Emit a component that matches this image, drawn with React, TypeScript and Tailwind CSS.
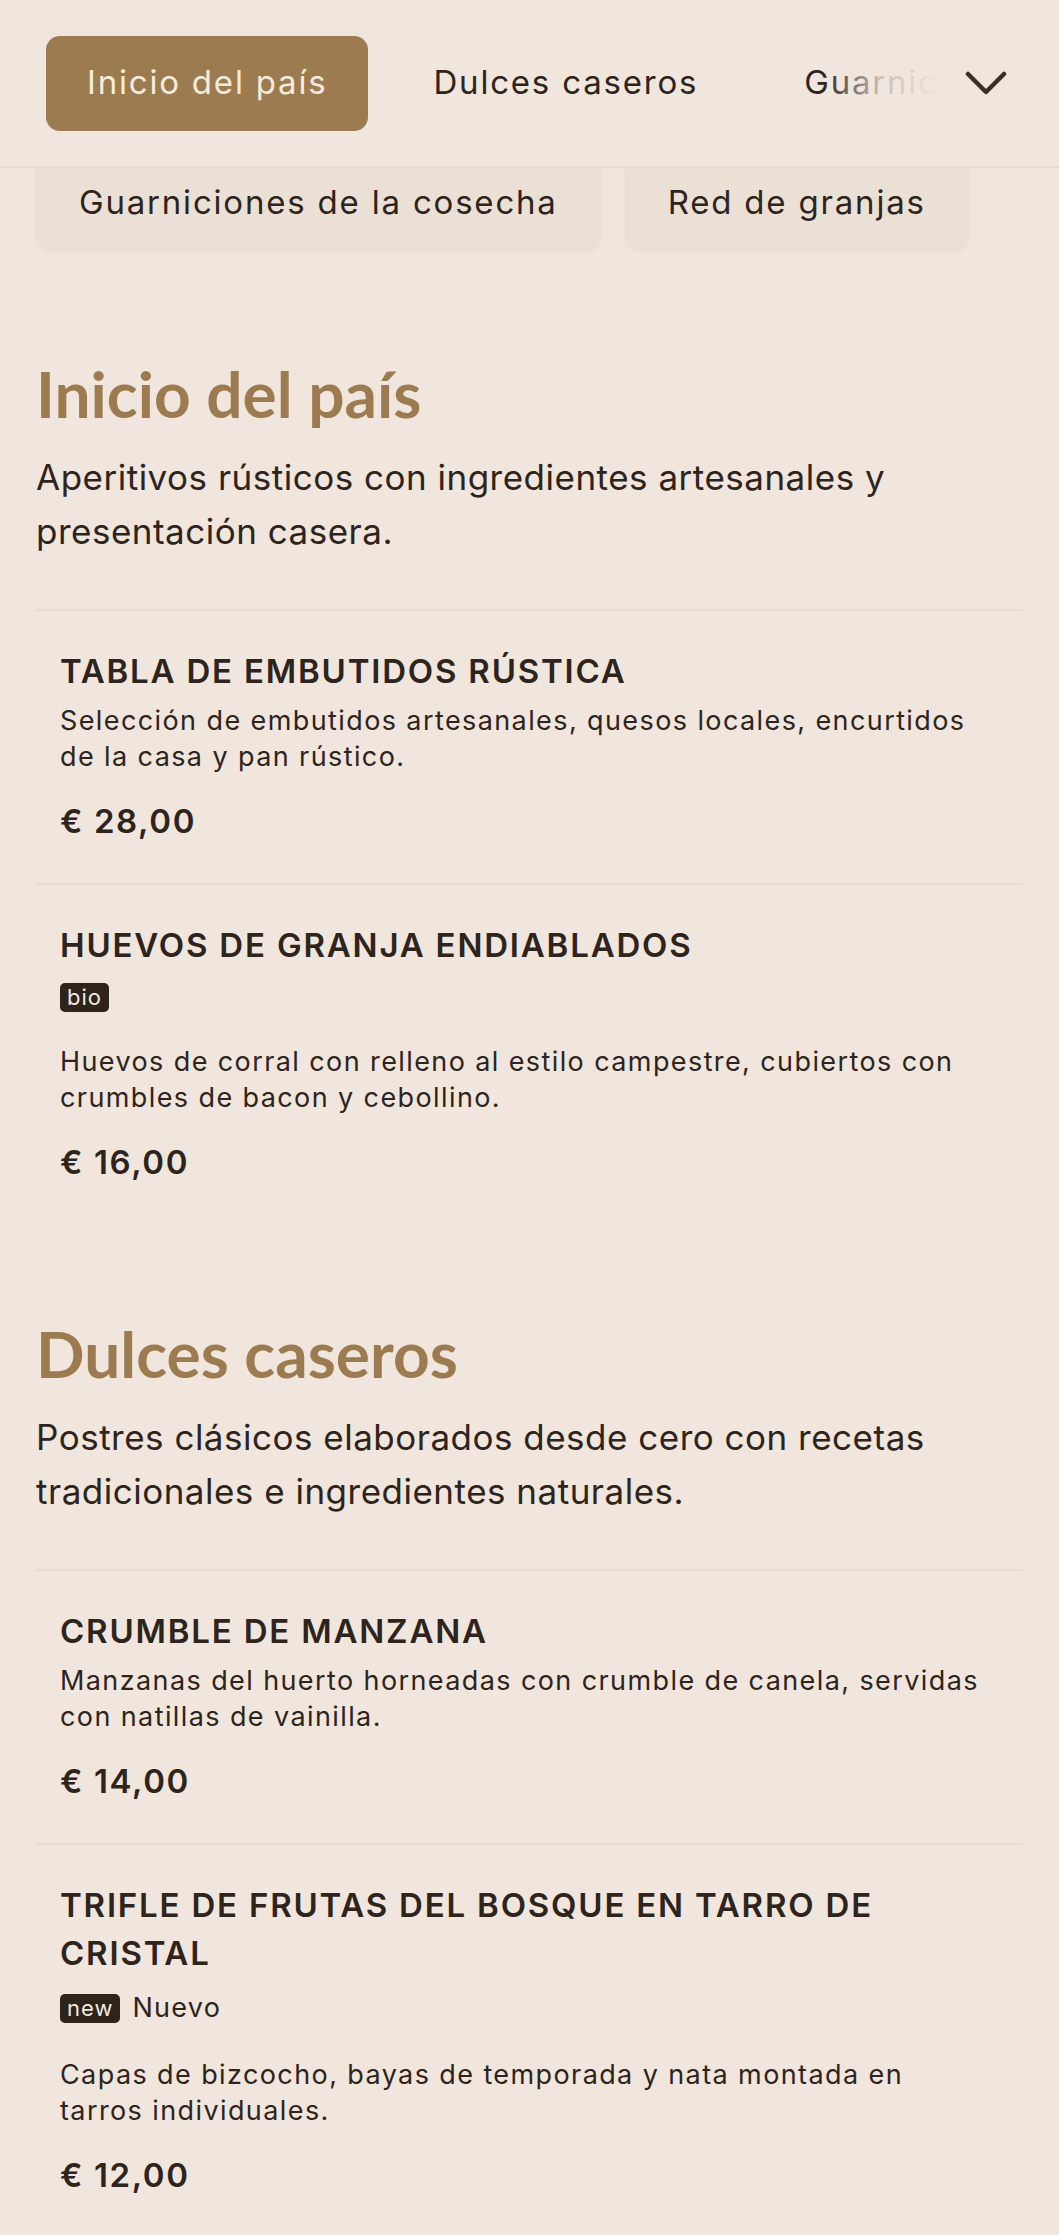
import React from 'react'

type Item = {
  name: string
  desc: string
  price: string
  badges?: { code: string; label?: string }[]
}

type Section = {
  title: string
  intro: string
  items: Item[]
}

const sections: Section[] = [
  {
    title: 'Inicio del país',
    intro: 'Aperitivos rústicos con ingredientes artesanales y presentación casera.',
    items: [
      {
        name: 'TABLA DE EMBUTIDOS RÚSTICA',
        desc: 'Selección de embutidos artesanales, quesos locales, encurtidos de la casa y pan rústico.',
        price: '€ 28,00',
      },
      {
        name: 'HUEVOS DE GRANJA ENDIABLADOS',
        desc: 'Huevos de corral con relleno al estilo campestre, cubiertos con crumbles de bacon y cebollino.',
        price: '€ 16,00',
        badges: [{ code: 'bio' }],
      },
    ],
  },
  {
    title: 'Dulces caseros',
    intro: 'Postres clásicos elaborados desde cero con recetas tradicionales e ingredientes naturales.',
    items: [
      {
        name: 'CRUMBLE DE MANZANA',
        desc: 'Manzanas del huerto horneadas con crumble de canela, servidas con natillas de vainilla.',
        price: '€ 14,00',
      },
      {
        name: 'TRIFLE DE FRUTAS DEL BOSQUE EN TARRO DE CRISTAL',
        desc: 'Capas de bizcocho, bayas de temporada y nata montada en tarros individuales.',
        price: '€ 12,00',
        badges: [{ code: 'new', label: 'Nuevo' }],
      },
    ],
  },
]

const tabs = ['Inicio del país', 'Dulces caseros', 'Guarniciones de la cosecha', 'Red de granjas']

function MenuItem({ item }: { item: Item }) {
  return (
    <div className="border-t-2 border-[#e8ddd3] pl-[24px] pr-[38px] pt-[36px] pb-[40px]">
      <h3 className="text-[33px] leading-[48px] font-semibold tracking-[1.8px]">{item.name}</h3>
      {item.badges && (
        <div className="mt-[14px] flex items-center gap-[12px]">
          {item.badges.map((b) => (
            <React.Fragment key={b.code}>
              <span className="h-[29px] px-[7px] rounded-[5px] bg-[#2e241c] text-[#f3e9df] text-[22px] leading-[29px] tracking-[1px]">
                {b.code}
              </span>
              {b.label && <span className="text-[27px] leading-[34px] tracking-[1.3px]">{b.label}</span>}
            </React.Fragment>
          ))}
        </div>
      )}
      <p className={`${item.badges ? 'mt-[32px]' : 'mt-[8px]'} text-[27px] leading-[36px] tracking-[1.4px]`}>
        {item.desc}
      </p>
      <div className="mt-[24px] text-[33px] leading-[44px] font-semibold tracking-[1.6px]">{item.price}</div>
    </div>
  )
}

export default function App() {
  return (
    <div
      className="min-h-screen bg-[#f0e6dd] text-[#2e241c] pb-[40px]"
      style={{ fontFamily: 'Inter, "Noto Sans", sans-serif' }}
    >
      {/* Category nav */}
      <header className="h-[168px] border-b-2 border-[#e8ddd3] flex items-center pl-[46px] pr-[52px]">
        <div className="relative flex-1 overflow-hidden">
          <div className="flex gap-[24px] whitespace-nowrap">
            {tabs.map((t, i) => (
              <button
                key={t}
                className={
                  i === 0
                    ? 'h-[95px] px-[41px] rounded-[14px] bg-[#9c7b51] text-[#f7ebdc] text-[33px] tracking-[1.8px] shrink-0'
                    : 'h-[95px] px-[41px] rounded-[14px] text-[#2e241c] text-[33px] tracking-[1.8px] shrink-0'
                }
              >
                {t}
              </button>
            ))}
          </div>
          <div className="absolute inset-y-0 right-0 w-[115px] bg-linear-to-r from-[#f0e6dd00] via-[#f0e6ddcc] to-[#f0e6dd]" />
        </div>
        <button className="ml-[27px] shrink-0">
          <svg width="42" height="26" viewBox="0 0 42 26" fill="none">
            <polyline
              points="3,4 21,22 39,4"
              stroke="#3a2f27"
              strokeWidth="4.5"
              strokeLinecap="round"
              strokeLinejoin="round"
            />
          </svg>
        </button>
      </header>

      {/* Overflow row */}
      <div className="flex gap-[24px] px-[36px]">
        {tabs.slice(2).map((t) => (
          <div
            key={t}
            className="h-[82px] px-[43px] pb-[13px] flex items-center rounded-b-[16px] bg-[#ebe0d6] shadow-[0_2px_3px_rgba(120,90,60,0.06)] text-[33px] tracking-[1.8px] whitespace-nowrap"
          >
            {t}
          </div>
        ))}
      </div>

      {sections.map((s, si) => (
        <section key={s.title} className={`${si === 0 ? 'mt-[104px]' : 'mt-[90px]'} px-[36px]`}>
          <h2
            className="text-[64px] leading-[79px] font-bold text-[#9c7b51]"
            style={{ fontFamily: 'Lato, "Open Sans", sans-serif' }}
          >
            {s.title}
          </h2>
          <p className="mt-[17px] text-[35px] leading-[54px] tracking-[0.5px]">{s.intro}</p>
          <div className="mt-[51px]">
            {s.items.map((item) => (
              <MenuItem key={item.name} item={item} />
            ))}
          </div>
        </section>
      ))}
    </div>
  )
}
